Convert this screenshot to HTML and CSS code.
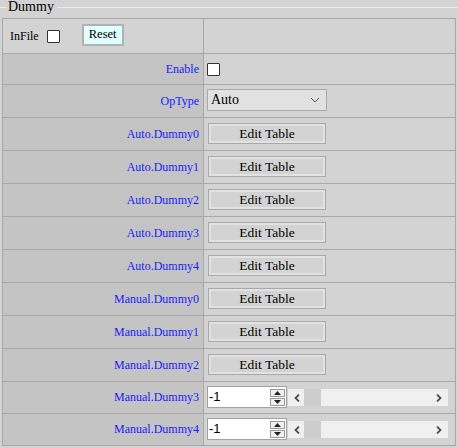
FILE: index.html
```html
<!DOCTYPE html>
<html>
<head>
<meta charset="utf-8">
<link rel="stylesheet" href="styles.css">
</head>
<body>
<div class="legend-row"><span class="legend">Dummy</span></div>
<div class="grid">
  <div class="cell head">
    <span class="infile">InFile</span>
    <span class="cb first"></span>
    <button class="reset">Reset</button>
  </div>
  <div class="cell val"></div>

  <div class="cell label">Enable</div>
  <div class="cell val"><span class="cb"></span></div>

  <div class="cell label">OpType</div>
  <div class="cell val">
    <div class="select"><span>Auto</span>
      <svg width="10" height="6" viewBox="0 0 10 6"><path d="M1 1 L5 5 L9 1" fill="none" stroke="#555" stroke-width="1"/></svg>
    </div>
  </div>

  <div class="cell label">Auto.Dummy0</div>
  <div class="cell val"><button class="edit">Edit Table</button></div>
  <div class="cell label">Auto.Dummy1</div>
  <div class="cell val"><button class="edit">Edit Table</button></div>
  <div class="cell label">Auto.Dummy2</div>
  <div class="cell val"><button class="edit">Edit Table</button></div>
  <div class="cell label">Auto.Dummy3</div>
  <div class="cell val"><button class="edit">Edit Table</button></div>
  <div class="cell label">Auto.Dummy4</div>
  <div class="cell val"><button class="edit">Edit Table</button></div>
  <div class="cell label">Manual.Dummy0</div>
  <div class="cell val"><button class="edit">Edit Table</button></div>
  <div class="cell label">Manual.Dummy1</div>
  <div class="cell val"><button class="edit">Edit Table</button></div>
  <div class="cell label">Manual.Dummy2</div>
  <div class="cell val"><button class="edit">Edit Table</button></div>

  <div class="cell label">Manual.Dummy3</div>
  <div class="cell val">
    <div class="num"><span class="num-text">-1</span>
      <div class="spin">
        <span class="sb"><svg width="7" height="4" viewBox="0 0 7 4"><path d="M0 4 L3.5 0 L7 4Z" fill="#222"/></svg></span>
        <span class="sb"><svg width="7" height="4" viewBox="0 0 7 4"><path d="M0 0 L3.5 4 L7 0Z" fill="#222"/></svg></span>
      </div>
    </div>
    <div class="scroll">
      <svg class="arr" width="6" height="8" viewBox="0 0 6 8"><path d="M5 0.5 L1.5 4 L5 7.5" fill="none" stroke="#505050" stroke-width="1.8"/></svg>
      <span class="thumb"></span>
      <span class="track"></span>
      <svg class="arr" width="6" height="8" viewBox="0 0 6 8"><path d="M1 0.5 L4.5 4 L1 7.5" fill="none" stroke="#505050" stroke-width="1.8"/></svg>
    </div>
  </div>

  <div class="cell label">Manual.Dummy4</div>
  <div class="cell val">
    <div class="num"><span class="num-text">-1</span>
      <div class="spin">
        <span class="sb"><svg width="7" height="4" viewBox="0 0 7 4"><path d="M0 4 L3.5 0 L7 4Z" fill="#222"/></svg></span>
        <span class="sb"><svg width="7" height="4" viewBox="0 0 7 4"><path d="M0 0 L3.5 4 L7 0Z" fill="#222"/></svg></span>
      </div>
    </div>
    <div class="scroll">
      <svg class="arr" width="6" height="8" viewBox="0 0 6 8"><path d="M5 0.5 L1.5 4 L5 7.5" fill="none" stroke="#505050" stroke-width="1.8"/></svg>
      <span class="thumb"></span>
      <span class="track"></span>
      <svg class="arr" width="6" height="8" viewBox="0 0 6 8"><path d="M1 0.5 L4.5 4 L1 7.5" fill="none" stroke="#505050" stroke-width="1.8"/></svg>
    </div>
  </div>
</div>
</body>
</html>
```
FILE: styles.css
```css
html, body {
  margin: 0;
  padding: 0;
  background: #d3d3d3;
  font-family: "Liberation Serif", "Times New Roman", serif;
  color: #000;
}
body {
  width: 458px;
  height: 448px;
  overflow: hidden;
}
.legend-row {
  display: flex;
  height: 18px;
}
.legend-row::before,
.legend-row::after {
  content: "";
  height: 0;
  margin-top: 7px;
  border-top: 1px solid #ebebeb;
}
.legend-row::before {
  width: 6px;
}
.legend-row::after {
  flex: 1;
}
.legend {
  font-size: 14px;
  line-height: 14px;
  padding: 0 3px 0 2px;
}
.grid {
  margin-left: 2px;
  width: 454px;
  box-sizing: border-box;
  padding: 1px;
  display: grid;
  grid-template-columns: 200px 251px;
  grid-template-rows: 34px 30px 32px repeat(8, 32px) 31px 31px;
  gap: 1px;
  background: #a8a8a8;
}
.cell {
  display: flex;
  align-items: center;
  box-sizing: border-box;
}
.head {
  background: #d3d3d3;
  padding-left: 7px;
  font-size: 12px;
}
.label {
  background: #c4c4c4;
  color: #1a1aff;
  font-size: 12px;
  justify-content: flex-end;
  padding-right: 4px;
}
.val {
  background: #d3d3d3;
  padding-left: 3px;
}
.cb {
  display: inline-block;
  width: 13px;
  height: 13px;
  box-sizing: border-box;
  border: 1px solid #333;
  background: #fff;
  border-radius: 1px;
}
.cb.first {
  margin-left: 8px;
}
.reset {
  margin-left: 22px;
  width: 42px;
  height: 22px;
  margin-top: -3px;
  box-sizing: border-box;
  border: 2px solid #b2b2b2;
  background: #e0ffff;
  font-family: "Liberation Serif", serif;
  font-size: 12.5px;
  padding: 0;
  color: #000;
}
.select {
  width: 120px;
  height: 22px;
  margin-top: -3px;
  box-sizing: border-box;
  border: 1px solid #a9a9a9;
  background: #e1e1e1;
  display: flex;
  align-items: center;
  justify-content: space-between;
  padding: 0 6px 0 3px;
  font-size: 14px;
}
.edit {
  margin-left: 1px;
  width: 118px;
  height: 21px;
  margin-top: -1px;
  box-sizing: border-box;
  border: 1px solid #a9a9a9;
  box-shadow: inset 0 0 0 2px #e2e2e2;
  background: #d3d3d3;
  font-family: "Liberation Serif", serif;
  font-size: 13.5px;
  padding: 0;
  color: #000;
}
.num {
  width: 80px;
  height: 22px;
  margin-top: -1px;
  box-sizing: border-box;
  border: 1px solid #a2a2a2;
  background: #fff;
  display: flex;
  align-items: center;
  justify-content: space-between;
  padding: 0 1px 0 1px;
}
.num-text {
  font-family: "Liberation Sans", Arial, sans-serif;
  font-size: 13px;
  margin-top: -2px;
}
.spin {
  display: flex;
  flex-direction: column;
  gap: 1px;
}
.sb {
  width: 15px;
  height: 8px;
  box-sizing: border-box;
  border: 1px solid #9a9a9a;
  background: #efefef;
  display: flex;
  align-items: center;
  justify-content: center;
}
.scroll {
  margin-left: 1px;
  width: 160px;
  height: 17px;
  background: #f0f0f0;
  display: flex;
  align-items: center;
  padding: 0 6px 0 6px;
  box-sizing: border-box;
}
.thumb {
  margin-left: 4px;
  width: 17px;
  height: 17px;
  background: #cdcdcd;
}
.track {
  flex: 1;
}
```
